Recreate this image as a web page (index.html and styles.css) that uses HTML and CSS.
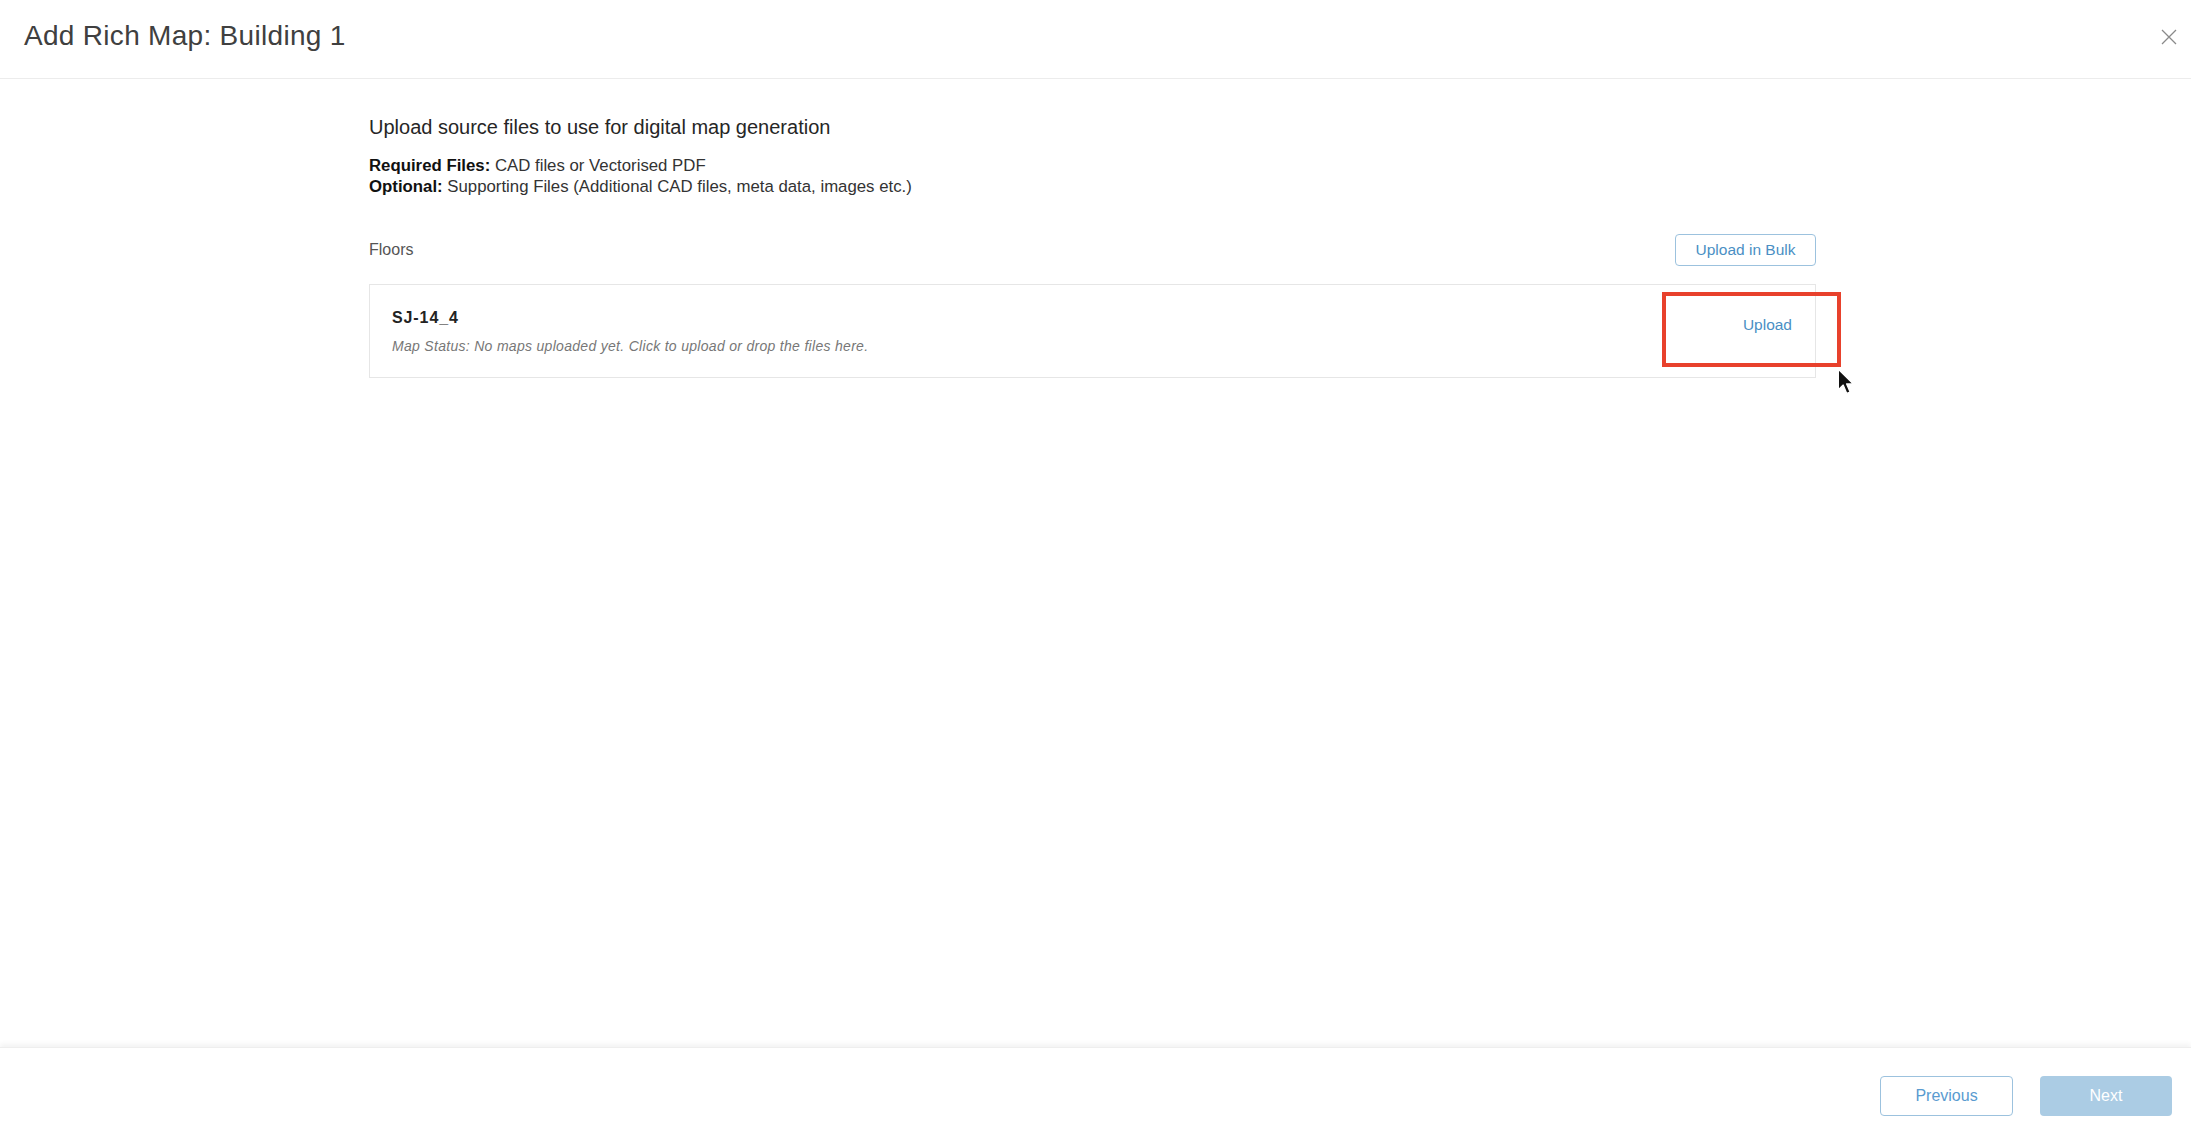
FILE: index.html
```html
<!doctype html>
<html lang="en">
<head>
	<meta charset="UTF-8" />
	<title>Add Rich Map</title>
<link rel="stylesheet" href="styles.css">
</head>
<body>
	<section id="wrap">
		<header class="head">
			<h1>Add Rich Map: Building 1</h1>
			<a href="javascript:;" class="close">
				<svg width="16" height="16" viewBox="0 0 16 16"><path d="M1 1L15 15M15 1L1 15" stroke="#8a8a8a" stroke-width="1.3" fill="none"/></svg>
			</a>
		</header>

		<main class="main">
			<div class="content">
				<h2 class="title">Upload source files to use for digital map generation</h2>
				<p class="info"><b>Required Files:</b> CAD files or Vectorised PDF</p>
				<p class="info"><b>Optional:</b> Supporting Files (Additional CAD files, meta data, images etc.)</p>

				<div class="floors-bar">
					<span class="floors-label">Floors</span>
					<a href="javascript:;" class="btn btn-line bulk">Upload in Bulk</a>
				</div>

				<div class="floor">
					<div class="floor-text">
						<p class="floor-name">SJ-14_4</p>
						<p class="floor-status">Map Status: No maps uploaded yet. Click to upload or drop the files here.</p>
					</div>
					<a href="javascript:;" class="upload">Upload</a>
					<!-- highlight box and pointer over the row -->
					<div class="mark"></div>
					<svg class="pointer" width="18" height="28" viewBox="0 0 14 22"><path d="M1 1L1 17L4.8 13.4L7.6 20L10.2 18.9L7.5 12.5L12.6 12.5Z" fill="#111" stroke="#fff" stroke-width="1" stroke-linejoin="round"/></svg>
				</div>
			</div>
		</main>

		<footer class="foot">
			<a href="javascript:;" class="btn btn-line prev">Previous</a>
			<a href="javascript:;" class="btn btn-fill next">Next</a>
		</footer>
	</section>
</body>
</html>
```

FILE: styles.css
```css
*{
	margin: 0;
	padding: 0;
	box-sizing: border-box;
}
html, body{
	height: 100%;
}
body{
	background: #fff;
	font-family: "Liberation Sans", Arial, sans-serif;
	color: #2b2b2b;
}
a{
	text-decoration: none;
}
#wrap{
	height: 100%;
	display: flex;
	flex-direction: column;
}

/* header */
.head{
	height: 79px;
	border-bottom: 1px solid #ececec;
	display: flex;
	align-items: center;
	justify-content: space-between;
	padding: 0 14px 0 24px;
}
.head h1{
	font-size: 28px;
	font-weight: normal;
	color: #404040;
	letter-spacing: 0.3px;
	margin-top: -6px;
}
.close{
	display: flex;
	width: 16px;
	height: 16px;
	margin-top: -4px;
}

/* content */
.main{
	flex: 1;
}
.content{
	width: 1447px;
	margin-left: 369px;
	padding-top: 36px;
}
.title{
	font-size: 20px;
	font-weight: normal;
	color: #262626;
	line-height: 24px;
	margin-bottom: 16px;
}
.info{
	font-size: 16.8px;
	line-height: 21px;
	color: #333;
}
.info b{
	color: #111;
}
.floors-bar{
	display: flex;
	align-items: center;
	justify-content: space-between;
	margin-top: 37px;
	height: 32px;
}
.floors-label{
	font-size: 16px;
	color: #555;
}
.btn{
	display: inline-flex;
	align-items: center;
	justify-content: center;
	border-radius: 4px;
	font-size: 15px;
}
.btn-line{
	border: 1px solid #9cc2de;
	color: #4a8fc4;
	background: #fff;
}
.bulk{
	width: 141px;
	height: 32px;
	font-size: 15.5px;
}
.floor{
	position: relative;
	margin-top: 18px;
	height: 94px;
	border: 1px solid #e6e6e6;
	display: flex;
	align-items: center;
	justify-content: space-between;
	padding: 0 23px 0 22px;
}
.floor-name{
	font-size: 16px;
	font-weight: bold;
	color: #222;
	letter-spacing: 0.9px;
	margin-bottom: 11px;
}
.floor-status{
	font-size: 14px;
	font-style: italic;
	color: #777;
	letter-spacing: 0.3px;
}
.upload{
	font-size: 15.5px;
	color: #4a8fc4;
	margin-top: -12px;
}
.mark{
	position: absolute;
	left: 1292px;
	top: 7px;
	width: 179px;
	height: 75px;
	border: 4px solid #e8412c;
}
.pointer{
	position: absolute;
	left: 1467px;
	top: 83px;
}

/* footer */
.foot{
	height: 94px;
	border-top: 1px solid #eee;
	box-shadow: 0 -3px 5px rgba(0,0,0,0.05);
	display: flex;
	align-items: center;
	justify-content: flex-end;
	gap: 27px;
	padding: 2px 19px 0 0;
}
.prev{
	width: 133px;
	height: 40px;
	color: #5a9bd0;
	font-size: 16px;
}
.btn-fill{
	background: #abcce4;
	color: #fff;
	border: none;
}
.next{
	width: 132px;
	height: 40px;
	font-size: 16px;
}
```
